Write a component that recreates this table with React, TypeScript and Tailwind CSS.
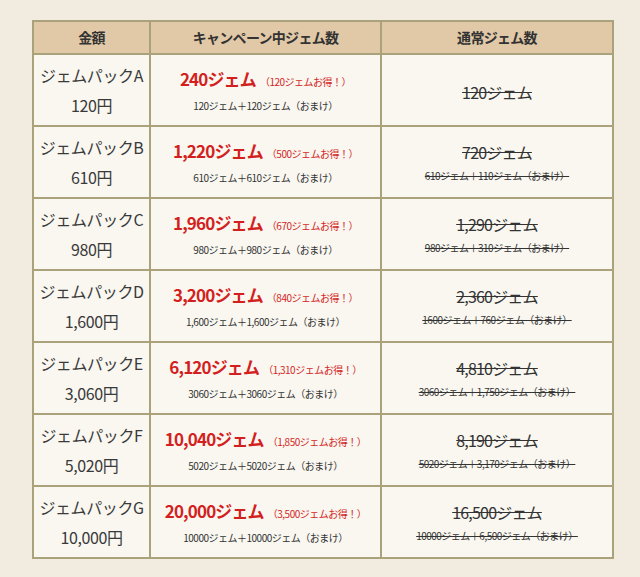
const ROWS = [
  { name: "ジェムパックA", price: "120円", gems: "240ジェム", bonus: "（120ジェムお得！）", detail: "120ジェム＋120ジェム（おまけ）", normal: "120ジェム", normalDetail: "" },
  { name: "ジェムパックB", price: "610円", gems: "1,220ジェム", bonus: "（500ジェムお得！）", detail: "610ジェム＋610ジェム（おまけ）", normal: "720ジェム", normalDetail: "610ジェム＋110ジェム（おまけ）" },
  { name: "ジェムパックC", price: "980円", gems: "1,960ジェム", bonus: "（670ジェムお得！）", detail: "980ジェム＋980ジェム（おまけ）", normal: "1,290ジェム", normalDetail: "980ジェム＋310ジェム（おまけ）" },
  { name: "ジェムパックD", price: "1,600円", gems: "3,200ジェム", bonus: "（840ジェムお得！）", detail: "1,600ジェム＋1,600ジェム（おまけ）", normal: "2,360ジェム", normalDetail: "1600ジェム＋760ジェム（おまけ）" },
  { name: "ジェムパックE", price: "3,060円", gems: "6,120ジェム", bonus: "（1,310ジェムお得！）", detail: "3060ジェム＋3060ジェム（おまけ）", normal: "4,810ジェム", normalDetail: "3060ジェム＋1,750ジェム（おまけ）" },
  { name: "ジェムパックF", price: "5,020円", gems: "10,040ジェム", bonus: "（1,850ジェムお得！）", detail: "5020ジェム＋5020ジェム（おまけ）", normal: "8,190ジェム", normalDetail: "5020ジェム＋3,170ジェム（おまけ）" },
  { name: "ジェムパックG", price: "10,000円", gems: "20,000ジェム", bonus: "（3,500ジェムお得！）", detail: "10000ジェム＋10000ジェム（おまけ）", normal: "16,500ジェム", normalDetail: "10000ジェム＋6,500ジェム（おまけ）" },
];

export default function App() {
  return (
    <div
      className="w-[640px] h-[577px] bg-[#f2ebe0] pt-[20px] pl-[32px] text-[#333]"
      style={{ fontFamily: '"Noto Sans CJK JP", "Noto Sans", sans-serif' }}
    >
      <table className="border-collapse border-2 border-[#aaa27a] w-[580px] table-fixed">
        <colgroup>
          <col className="w-[117px]" />
          <col className="w-[231px]" />
          <col className="w-[232px]" />
        </colgroup>
        <thead>
          <tr className="h-[33px] bg-[#e1c8a6] text-[14px] font-bold">
            <th className="border-2 border-[#aaa27a] tracking-tighter">金額</th>
            <th className="border-2 border-[#aaa27a] tracking-tighter">キャンペーン中ジェム数</th>
            <th className="border-2 border-[#aaa27a] tracking-tighter">通常ジェム数</th>
          </tr>
        </thead>
        <tbody>
          {ROWS.map((r) => (
            <tr key={r.name} className="h-[72px] bg-[#f9f7f0]">
              <td className="border-2 border-[#aaa27a] text-center text-[16px] leading-[30px] text-[#3a3a3a] tracking-tight">
                <div>{r.name}</div>
                <div>{r.price}</div>
              </td>
              <td className="border-2 border-[#aaa27a] text-center pt-[4px]">
                <div className="leading-[24px] whitespace-nowrap">
                  <span className="text-[17px] font-bold text-[#d41f1f] tracking-tighter">{r.gems}</span>
                  <span className="text-[10px] text-[#d41f1f] ml-[4px] tracking-tighter">{r.bonus}</span>
                </div>
                <div className="text-[10px] leading-[24px] tracking-tighter text-[#333]">{r.detail}</div>
              </td>
              <td className="border-2 border-[#aaa27a] text-center pt-[4px]">
                <div className="text-[16px] leading-[24px] line-through tracking-tighter text-[#333]">{r.normal}</div>
                {r.normalDetail && (
                  <div className="text-[10px] leading-[24px] line-through tracking-tighter text-[#333]">{r.normalDetail}</div>
                )}
              </td>
            </tr>
          ))}
        </tbody>
      </table>
    </div>
  );
}
